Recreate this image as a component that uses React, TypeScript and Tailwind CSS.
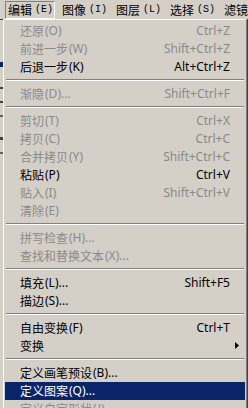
import React from "react";

type Entry =
  | { label: string; shortcut?: string; disabled?: boolean; submenu?: boolean; active?: boolean }
  | "sep";

const MENU: Entry[] = [
  { label: "还原(O)", shortcut: "Ctrl+Z", disabled: true },
  { label: "前进一步(W)", shortcut: "Shift+Ctrl+Z", disabled: true },
  { label: "后退一步(K)", shortcut: "Alt+Ctrl+Z" },
  "sep",
  { label: "渐隐(D)...", shortcut: "Shift+Ctrl+F", disabled: true },
  "sep",
  { label: "剪切(T)", shortcut: "Ctrl+X", disabled: true },
  { label: "拷贝(C)", shortcut: "Ctrl+C", disabled: true },
  { label: "合并拷贝(Y)", shortcut: "Shift+Ctrl+C", disabled: true },
  { label: "粘贴(P)", shortcut: "Ctrl+V" },
  { label: "贴入(I)", shortcut: "Shift+Ctrl+V", disabled: true },
  { label: "清除(E)", disabled: true },
  "sep",
  { label: "拼写检查(H)...", disabled: true },
  { label: "查找和替换文本(X)...", disabled: true },
  "sep",
  { label: "填充(L)...", shortcut: "Shift+F5" },
  { label: "描边(S)..." },
  "sep",
  { label: "自由变换(F)", shortcut: "Ctrl+T" },
  { label: "变换", submenu: true },
  "sep",
  { label: "定义画笔预设(B)..." },
  { label: "定义图案(Q)...", active: true },
  { label: "定义自定形状(J)...", disabled: true },
];

const BAR = [
  { cjk: "编辑", key: "(E)" },
  { cjk: "图像", key: "(I)" },
  { cjk: "图层", key: "(L)" },
  { cjk: "选择", key: "(S)" },
  { cjk: "滤镜", key: "(T)" },
];

// split a label into CJK runs and latin runs
function Label({ text }: { text: string }) {
  const parts = text.split(/([\u3000-\u9fff]+)/).filter(Boolean);
  return (
    <>
      {parts.map((p, i) =>
        /[\u3000-\u9fff]/.test(p) ? (
          <span key={i} className="font-['Noto_Sans_CJK_SC',sans-serif] text-[12px]">
            {p}
          </span>
        ) : (
          <span key={i} className="font-['Noto_Sans',sans-serif] text-[12px] pl-[1px]">
            {p}
          </span>
        )
      )}
    </>
  );
}

const App: React.FC = () => {
  return (
    <div className="w-[248px] h-[408px] overflow-hidden bg-[#d4d0c8] flex flex-col leading-none select-none">
      {/* Menu bar */}
      <div className="h-[19px] flex flex-none items-stretch whitespace-nowrap text-black">
        {BAR.map((b, i) => (
          <div
            key={b.cjk}
            className={
              i === 0
                ? "ml-[5px] mt-[1px] w-[50px] flex-none flex items-center pl-[2px] border-t border-l border-[#808080] border-b-white border-r-white border-b border-r"
                : "w-[54px] flex-none flex items-center pl-[7px]"
            }
          >
            <span className="font-['Noto_Sans_CJK_SC',sans-serif] text-[12px]">{b.cjk}</span>
            <span className="ml-[3px] font-['Liberation_Mono',monospace] text-[10px]">{b.key}</span>
          </div>
        ))}
      </div>

      <div className="flex flex-1 min-h-0">
        {/* what lies under the menu, left edge */}
        <div className="w-[3px] flex-none flex flex-col">
          <div className="h-[1px] bg-[#404040]" />
          <div className="h-[42px]" />
          <div className="h-[5px] bg-[#0a246a]" />
          <div className="h-[20px]" />
          <div className="h-[2px] bg-[#404040]" />
          <div className="h-[12px]" />
          <div className="h-[2px] bg-[#404040]" />
          <div className="h-[12px]" />
          <div className="h-[2px] bg-[#606060]" />
          <div className="h-[20px]" />
          <div className="h-[3px] bg-[#404040]" />
          <div className="h-[12px]" />
          <div className="h-[2px] bg-[#606060]" />
        </div>

        {/* Dropdown */}
        <div className="w-[245px] flex-none border-r border-[#404040]">
          <div className="border-t border-l border-white border-r border-r-[#808080] px-[1px] pt-[2px]">
            {MENU.map((e, i) =>
              e === "sep" ? (
                <div key={i} className="h-[9px] pt-[3px] px-[1px]">
                  <div className="h-[1px] bg-[#808080]" />
                  <div className="h-[1px] bg-white" />
                </div>
              ) : (
                <div
                  key={i}
                  className={
                    "h-[18px] flex items-center justify-between pl-[15px] pr-[15px] whitespace-nowrap relative " +
                    (e.active ? "bg-[#0a246a] text-white" : e.disabled ? "text-[#8a8a8a]" : "text-black")
                  }
                >
                  <span className="flex items-center">
                    <Label text={e.label} />
                  </span>
                  {e.shortcut && (
                    <span className="font-['Noto_Sans',sans-serif] text-[12px]">{e.shortcut}</span>
                  )}
                  {e.submenu && (
                    <svg width="4" height="7" viewBox="0 0 4 7" className="absolute right-[6px] top-[5px]">
                      <path d="M0 0 L4 3.5 L0 7 Z" fill="#000" />
                    </svg>
                  )}
                </div>
              )
            )}
          </div>
        </div>
      </div>
    </div>
  );
};

export default App;
